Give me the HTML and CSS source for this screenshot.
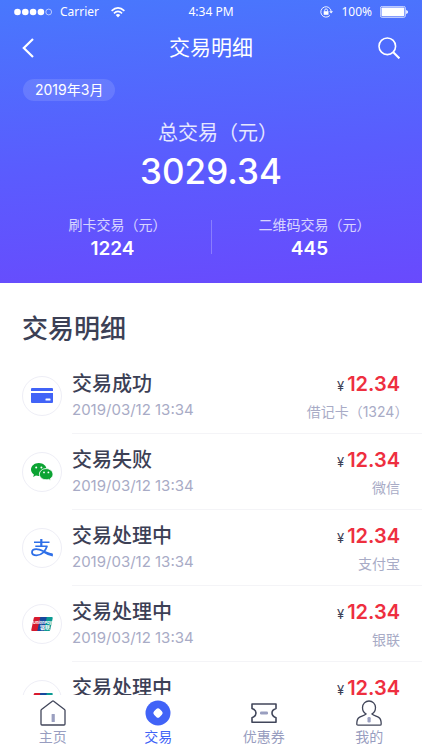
FILE: index.html
```html
<!DOCTYPE html>
<html lang="zh-CN">
<head>
<meta charset="utf-8">
<meta name="viewport" content="width=device-width, initial-scale=1">
<title>交易明细</title>
<link rel="stylesheet" href="styles.css">
</head>
<body>
<header class="hero">
  <div class="status">
    <div class="status-side">
      <svg width="38" height="8" viewBox="0 0 38 8" fill="#fff"><circle cx="3.500" cy="4" r="3.300"/><circle cx="11.300" cy="4" r="3.300"/><circle cx="19.100" cy="4" r="3.300"/><circle cx="26.900" cy="4" r="3.300"/><circle cx="34.700" cy="4" r="2.900" fill="none" stroke="#fff" stroke-width=".6"/></svg>
      <span class="carrier">Carrier</span>
      <svg width="14" height="11" viewBox="0 0 14 11" fill="none" stroke="#fff" stroke-width="1.600"><path d="M.6 3.900Q7-2 13.400 3.900"/><path d="M2.900 6.300Q7 2.600 11.100 6.300"/><path d="M4.700 8.100Q7 6 9.300 8.100L7 10.600Z" fill="#fff" stroke="none"/></svg>
    </div>
    <span>4:34 PM</span>
    <div class="status-side status-end">
      <svg class="lock" width="13" height="12" viewBox="0 0 13 12" fill="none" stroke="#fff"><path d="M9.900 9.400A5.200 5.200 0 1 1 11.200 5.400" stroke-width=".9"/><path d="M9.200 5.200H13L11.100 7.600Z" fill="#fff" stroke="none"/><rect x="3.700" y="5.200" width="4.800" height="3.600" fill="#fff" stroke="none"/><path d="M4.700 5.500V4.300a1.400 1.400 0 0 1 2.800 0V5.500" stroke-width=".9"/></svg>
      <span>100%</span>
      <svg width="28" height="12" viewBox="0 0 28 12" fill="#fff"><rect x=".4" y=".4" width="25" height="11" rx="1.800" fill="none" stroke="#fff" stroke-width=".7"/><rect x="1.500" y="1.500" width="22.800" height="8.800" rx=".8"/><path d="M26.200 4Q28 4.500 28 6T26.200 8Z"/></svg>
    </div>
  </div>

  <div class="titlebar">
    <a class="icon-link" href="#back" aria-label="返回"><svg width="13" height="20" viewBox="0 0 13 20" fill="none" stroke="#fff" stroke-width="2.200"><path d="M11 1L1.800 10L11 19"/></svg></a>
    <h1>交易明细</h1>
    <button class="icon-link" type="button" aria-label="搜索"><svg width="22" height="22" viewBox="0 0 22 22" fill="none" stroke="#fff" stroke-width="1.600"><circle cx="9.300" cy="9.300" r="8.300"/><path d="M15.300 15.300L21.400 21.400" stroke-width="2"/></svg></button>
  </div>

  <button class="month" type="button">2019年3月</button>

  <div class="total">
    <div class="unit-label">总交易（元）</div>
    <div class="total-value">3029.34</div>
  </div>

  <div class="stats">
    <div class="stat"><div class="unit-label">刷卡交易（元）</div><div class="stat-value">1224</div></div>
    <div class="stat"><div class="unit-label">二维码交易（元）</div><div class="stat-value">445</div></div>
  </div>
</header>

<main class="content">
  <h2>交易明细</h2>
  <ul class="list">
    <li class="row">
      <span class="badge"><svg width="22" height="16" viewBox="0 0 22 16"><path d="M1 0H21Q22 0 22 1V3H0V1Q0 0 1 0ZM0 5H22V14Q22 15 21 15H1Q0 15 0 14Z" fill="#4163f7"/><rect x="14.500" y="10.500" width="5" height="2" rx=".5" fill="#fff"/></svg></span>
      <div class="detail">
        <div class="info"><h3>交易成功</h3><time>2019/03/12 13:34</time></div>
        <div class="pay"><div class="amount"><span class="yen">¥</span>12.34</div><div class="method hang">借记卡（1324）</div></div>
      </div>
    </li>
    <li class="row">
      <span class="badge"><svg width="22" height="18" viewBox="0 0 22 18"><path d="M7.800 0C3.500 0 0 2.900 0 6.500c0 2 1.100 3.800 2.900 5L2.200 14l2.700-1.500c.9.300 1.900.5 2.900.5 4.300 0 7.800-2.900 7.800-6.500S12.100 0 7.800 0Z" fill="#0ba332"/><path d="M15.200 5.600C11.400 5.600 8.400 8.100 8.400 11.200s3 5.600 6.800 5.600c.8 0 1.700-.1 2.400-.4L20 17.700l-.6-2.200c1.600-1 2.600-2.600 2.600-4.300 0-3.100-3-5.600-6.800-5.600Z" fill="#0ba332" stroke="#fff" stroke-width=".9"/><g fill="#fff"><circle cx="5.200" cy="4.500" r="1"/><circle cx="10.400" cy="4.500" r="1"/><circle cx="13" cy="9.400" r=".9"/><circle cx="17.400" cy="9.400" r=".9"/></g></svg></span>
      <div class="detail">
        <div class="info"><h3>交易失败</h3><time>2019/03/12 13:34</time></div>
        <div class="pay"><div class="amount"><span class="yen">¥</span>12.34</div><div class="method">微信</div></div>
      </div>
    </li>
    <li class="row">
      <span class="badge"><svg width="22" height="20" viewBox="0 0 22 20" fill="none" stroke="#2e6fe8"><path d="M3 4.200H18.500M4.300 8.200H16.500" stroke-width="1.500"/><path d="M10.300 1V8" stroke-width="2.200"/><path d="M16 8.200C14.500 13 10.500 17.300 5.500 17.300C2.800 17.300 1 16.200 1 14.300C1 12.500 2.800 11.200 5.300 11.200C9.500 11.200 14 14.600 21.500 16.600" stroke-width="1.800"/><path d="M13 13.300Q17 15.400 21.800 15.800V18.500Q16 17.300 12 14.500Z" fill="#2e6fe8" stroke="none"/></svg></span>
      <div class="detail">
        <div class="info"><h3>交易处理中</h3><time>2019/03/12 13:34</time></div>
        <div class="pay"><div class="amount"><span class="yen">¥</span>12.34</div><div class="method">支付宝</div></div>
      </div>
    </li>
    <li class="row">
      <span class="badge"><svg width="22" height="14" viewBox="0 0 22 14"><path d="M4 0H11L8 14H1.200Q0 14 .3 12.800L2.800 1Q3 0 4 0Z" fill="#d7192d"/><path d="M9.300 0H17L14 14H6.300Z" fill="#17479e"/><path d="M15.800 0H20.800Q22 0 21.700 1.200L19.200 13Q19 14 18 14H12.800Z" fill="#0b9a93"/><text x="2" y="7" class="up-latin">UnionPay</text><text x="9" y="12" class="up-cjk">银联</text></svg></span>
      <div class="detail">
        <div class="info"><h3>交易处理中</h3><time>2019/03/12 13:34</time></div>
        <div class="pay"><div class="amount"><span class="yen">¥</span>12.34</div><div class="method">银联</div></div>
      </div>
    </li>
    <li class="row">
      <span class="badge"><svg width="22" height="14" viewBox="0 0 22 14"><path d="M4 0H11L8 14H1.200Q0 14 .3 12.800L2.800 1Q3 0 4 0Z" fill="#d7192d"/><path d="M9.300 0H17L14 14H6.300Z" fill="#17479e"/><path d="M15.800 0H20.800Q22 0 21.700 1.200L19.200 13Q19 14 18 14H12.800Z" fill="#0b9a93"/></svg></span>
      <div class="detail">
        <div class="info"><h3>交易处理中</h3></div>
        <div class="pay"><div class="amount"><span class="yen">¥</span>12.34</div></div>
      </div>
    </li>
  </ul>
</main>

<nav class="tabs">
  <a href="#home"><svg width="26" height="26" viewBox="0 0 26 26" fill="none" stroke="#41465a" stroke-width="1.300"><path d="M1 10.300Q1 9.800 1.500 9.400L12.300 1.200Q13 .7 13.700 1.200L24.500 9.400Q25 9.800 25 10.300V24Q25 25 24 25H2Q1 25 1 24Z"/><rect x="11.600" y="14" width="3.200" height="8" rx=".5" fill="#9a9fc0" stroke="none"/></svg>主页</a>
  <a href="#trade" class="active" aria-current="page"><svg width="26" height="26" viewBox="0 0 26 26"><circle cx="13" cy="13" r="12.500" fill="#4163f7"/><path d="M11.300 9.100Q13 7.400 14.700 9.100L16.900 11.300Q18.600 13 16.900 14.700L14.700 16.900Q13 18.600 11.300 16.900L9.100 14.700Q7.400 13 9.100 11.300Z" fill="#fff"/></svg>交易</a>
  <a href="#coupon"><svg width="26" height="26" viewBox="0 0 26 26" fill="none" stroke="#41465a" stroke-width="1.600"><path d="M1 4H25V8.500Q21 9.800 21 13T25 17.800V22.300H1V17.800Q5 16.200 5 13T1 8.500Z" stroke-linejoin="round"/><rect x="9" y="11.500" width="8" height="3" rx="1.300" fill="#9a9fc0" stroke="none"/></svg>优惠券</a>
  <a href="#me"><svg width="26" height="26" viewBox="0 0 26 26" fill="none" stroke="#41465a" stroke-width="1.300"><path d="M10 14C7.800 12.700 6.500 10.400 6.500 7.500A6.500 6.500 0 0 1 19.500 7.500C19.500 10.400 18.200 12.700 16 14C17.500 15.600 21 16.300 23 17.600C24.600 18.700 25.200 20.500 25.200 24Q25.200 25.200 24 25.200H2Q.8 25.200 .8 24C.8 20.500 1.400 18.700 3 17.600C5 16.300 8.500 15.600 10 14Z"/><rect x="11.500" y="17" width="3.200" height="5.500" rx="1.300" fill="#9a9fc0" stroke="none"/></svg>我的</a>
</nav>
</body>
</html>
```
FILE: styles.css
```css
* { box-sizing: border-box; margin: 0; padding: 0; }

body {
  display: flex;
  flex-direction: column;
  height: 100vh;
  overflow: hidden;
  background: #fff;
  color: #3c4055;
  font-family: Inter, "Noto Sans CJK SC", sans-serif;
}

svg { display: block; flex: none; }
.up-latin { font-size: 4px; font-weight: 700; font-style: italic; fill: #fff; }
.up-cjk { font-size: 5px; font-weight: 700; fill: #fff; }

button { border: 0; background: none; color: inherit; font: inherit; }
a { color: inherit; text-decoration: none; }

.hero {
  flex: none;
  padding-bottom: 22px;
  background: linear-gradient(176deg, #4878fd, #5a5cfe 55%, #694afd);
  color: #fff;
}

.status {
  display: flex;
  align-items: center;
  height: 24px;
  padding: 0 14px;
  font-family: "Noto Sans", sans-serif;
  font-size: 12px;
  line-height: 24px;
}
.status-side { display: flex; flex: 1; align-items: center; gap: 8px; }
.status-end { justify-content: flex-end; }
.carrier { margin-right: 4px; }

.titlebar {
  display: flex;
  align-items: center;
  justify-content: space-between;
  height: 47px;
  padding: 0 22px;
}
.titlebar h1 { font-size: 21px; font-weight: 400; line-height: 28px; }
.icon-link { display: flex; width: 24px; justify-content: flex-start; }
button.icon-link { justify-content: flex-end; }

.month {
  display: block;
  height: 22px;
  margin: 8px 23px 0;
  padding: 0 12px;
  border-radius: 11px;
  background: rgba(255, 255, 255, 0.12);
  font-size: 14px;
  line-height: 22px;
}

.total { margin-top: 18px; text-align: center; }
/* Balances the blank half of the closing full-width bracket. */
.unit-label { padding-left: 0.7em; opacity: 0.85; white-space: nowrap; }
.total .unit-label { font-size: 20px; line-height: 28px; }
.total-value { font-size: 35px; font-weight: 500; line-height: 48px; }

.stats { display: flex; margin-top: 18px; padding: 0 14px; }
.stat { flex: 1; text-align: center; }
.stat + .stat {
  background: linear-gradient(rgba(255, 255, 255, 0.25), rgba(255, 255, 255, 0.25)) left center / 1px 34px no-repeat;
}
.stat .unit-label { font-size: 14px; line-height: 24px; opacity: 0.75; }
.stat-value { font-size: 19px; font-weight: 600; line-height: 24px; }

.content { flex: 1; min-height: 0; overflow: hidden; padding-top: 28px; }
.content h2 { padding: 0 22px; font-size: 26px; font-weight: 500; line-height: 36px; }

.list { margin-top: 11px; list-style: none; }
.row { display: flex; align-items: center; padding-left: 22px; }
.badge {
  display: flex;
  flex: none;
  align-items: center;
  justify-content: center;
  width: 40px;
  height: 40px;
  border: 1px solid #eeeef6;
  border-radius: 50%;
}
.detail {
  display: flex;
  flex: 1;
  justify-content: space-between;
  height: 76px;
  margin-left: 10px;
  padding: 12px 22px 0 0;
  border-bottom: 1px solid #f4f4f7;
}
.detail h3 { font-size: 20px; font-weight: 500; line-height: 28px; }
.info time { display: block; color: #a8abc6; font-size: 15px; line-height: 24px; }
.pay { text-align: right; }
.amount { color: #ee2f3f; font-size: 20px; font-weight: 600; line-height: 28px; }
.yen { margin-right: 3px; color: #3c4055; font-size: 13px; font-weight: 400; }
.method { color: #a8abc6; font-size: 14px; line-height: 24px; }
/* Lets the blank half of the closing bracket hang past the edge. */
.hang { margin-right: -0.6em; }

.tabs { display: flex; flex: none; padding: 5px 0 3px; background: #fff; }
.tabs a {
  display: flex;
  flex: 1;
  flex-direction: column;
  align-items: center;
  color: #989dc0;
  font-size: 14px;
  line-height: 21px;
}
.tabs .active { color: #4163f7; }
```
